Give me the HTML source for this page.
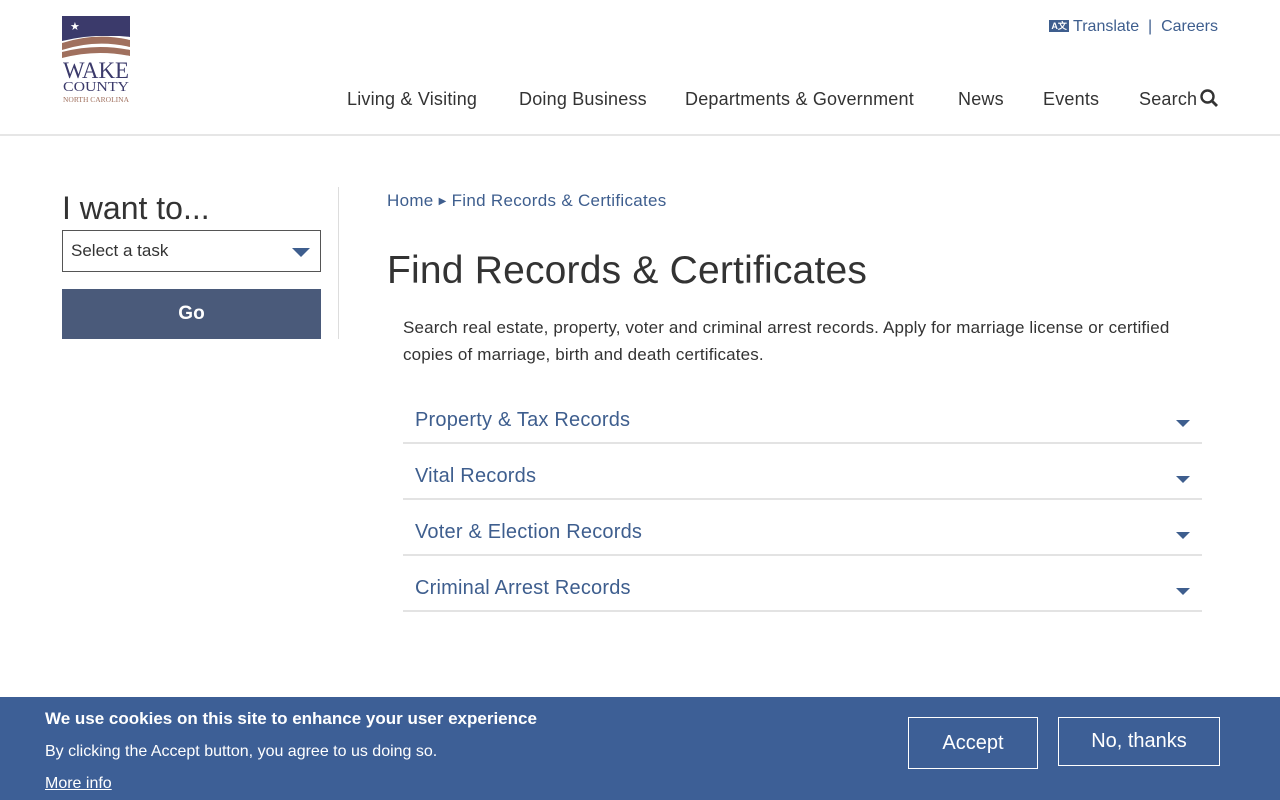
<!DOCTYPE html>
<html><head><meta charset="utf-8"><style>
body{margin:0;width:1280px;height:800px;position:relative;overflow:hidden;font-family:"Liberation Sans",sans-serif;background:#fff;color:#333}
a{text-decoration:none}
.hdr{position:absolute;left:0;top:0;width:1280px;height:134px;border-bottom:2px solid #e6e6e6}
.top{position:absolute;right:62px;top:18px;font-size:16px;color:#3e5e8e}
.nav{position:absolute;top:89px;font-size:18px;color:#333;letter-spacing:0.2px}
.side{position:absolute;left:62px;top:190px}
.acc{position:absolute;left:403px;width:799px;height:42px;border-bottom:2px solid #e3e3e3;font-size:20px;color:#3e5e8e;letter-spacing:0.2px}
.acc span{position:absolute;left:12px;top:9px}
.acc i{position:absolute;right:12px;top:20px;width:0;height:0;border-left:7px solid transparent;border-right:7px solid transparent;border-top:7px solid #3e5e8e}
.cookie{position:absolute;left:0;top:697px;width:1280px;height:103px;background:#3d5f96;color:#fff}
.btn{position:absolute;border:1px solid #fff;color:#fff;font-size:20px;text-align:center;box-sizing:border-box}
</style></head><body>
<div class="hdr">
<svg style="position:absolute;left:62px;top:16px" width="69" height="88" viewBox="0 0 69 88">
<rect x="0" y="0" width="68" height="20" fill="#3b3a6b"/>
<path d="M0 20 L68 17 L68 21 Q34 17 0 25Z" fill="#3b3a6b"/>
<path d="M0 27 Q34 16 68 24 L68 31 Q34 23 0 34Z" fill="#a0705e"/>
<path d="M0 36 Q34 27 68 34 L68 40 Q34 33 0 42Z" fill="#a0705e"/>
<text x="8" y="14" font-size="11" fill="#fff">★</text>
<text x="34" y="62" font-size="23" font-family="Liberation Serif" fill="#3b3a6b" text-anchor="middle" textLength="66" lengthAdjust="spacingAndGlyphs">WAKE</text>
<text x="34" y="75" font-size="14" font-family="Liberation Serif" fill="#3b3a6b" text-anchor="middle" textLength="66" lengthAdjust="spacingAndGlyphs">COUNTY</text>
<text x="34" y="86" font-size="7" font-family="Liberation Serif" fill="#a0705e" text-anchor="middle" textLength="66" lengthAdjust="spacingAndGlyphs">NORTH CAROLINA</text>
</svg>
<div class="top"><span style="display:inline-block;background:#3e5e8e;color:#fff;font-size:9px;font-weight:bold;padding:0 2px;line-height:12px;vertical-align:2px">A文</span> Translate &nbsp;| &nbsp;Careers</div>
<div class="nav" style="left:347px">Living &amp; Visiting</div>
<div class="nav" style="left:519px">Doing Business</div>
<div class="nav" style="left:685px">Departments &amp; Government</div>
<div class="nav" style="left:958px">News</div>
<div class="nav" style="left:1043px">Events</div>
<div class="nav" style="left:1139px">Search <svg width="18" height="18" viewBox="0 0 18 18" style="position:absolute;left:61px;top:0"><circle cx="7.5" cy="7.5" r="6" fill="none" stroke="#333" stroke-width="2.4"/><line x1="12" y1="12" x2="17" y2="17" stroke="#333" stroke-width="2.8"/></svg></div>
</div>
<div class="side">
<div style="font-size:32px;color:#333;position:absolute;top:0;white-space:nowrap">I want to...</div>
<div style="position:absolute;top:40px;width:259px;height:42px;border:1px solid #555;box-sizing:border-box;font-size:17px;padding:10px 8px">Select a task<i style="position:absolute;right:10px;top:17px;border-left:9px solid transparent;border-right:9px solid transparent;border-top:9px solid #3e5e8e"></i></div>
<div style="position:absolute;top:99px;width:259px;height:50px;background:#4a5a7a;color:#fff;font-weight:bold;font-size:19px;text-align:center;line-height:50px">Go</div>
</div>
<div style="position:absolute;left:338px;top:187px;width:1px;height:152px;background:#ddd"></div>
<div style="position:absolute;left:387px;top:191px;font-size:17px;color:#3e5e8e;letter-spacing:0.3px">Home <span style="font-size:10px;vertical-align:2px">▶</span> Find Records &amp; Certificates</div>
<div style="position:absolute;left:387px;top:249px;font-size:39px;color:#333;letter-spacing:0.2px">Find Records &amp; Certificates</div>
<div style="position:absolute;left:403px;top:314px;width:800px;font-size:17px;line-height:27px;color:#333;letter-spacing:0.15px">Search real estate, property, voter and criminal arrest records. Apply for marriage license or certified copies of marriage, birth and death certificates.</div>
<div class="acc" style="top:400px"><span>Property &amp; Tax Records</span><i></i></div>
<div class="acc" style="top:456px"><span>Vital Records</span><i></i></div>
<div class="acc" style="top:512px"><span>Voter &amp; Election Records</span><i></i></div>
<div class="acc" style="top:568px"><span>Criminal Arrest Records</span><i></i></div>
<div class="cookie">
<div style="position:absolute;left:45px;top:12px;font-size:17px;font-weight:bold">We use cookies on this site to enhance your user experience</div>
<div style="position:absolute;left:45px;top:46px;font-size:16px">By clicking the Accept button, you agree to us doing so.</div>
<div style="position:absolute;left:45px;top:78px;font-size:16px;text-decoration:underline">More info</div>
<div class="btn" style="left:908px;top:20px;width:130px;height:52px;line-height:50px">Accept</div>
<div class="btn" style="left:1058px;top:20px;width:162px;height:49px;line-height:46px">No, thanks</div>
</div>
</body></html>
